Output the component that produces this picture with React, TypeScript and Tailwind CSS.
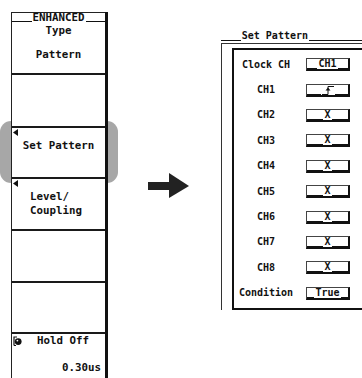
import React from "react";

const mono = { fontFamily: '"DejaVu Sans Mono", "Liberation Mono", monospace' };

function Tri() {
  return (
    <svg width="5" height="7" viewBox="0 0 5 7" className="absolute left-[1px] top-[1px]">
      <polygon points="5,0 0,3.5 5,7" fill="#111" />
    </svg>
  );
}

function Divider() {
  return <div className="h-[2px] bg-[#1a1a1a]" />;
}

function ValueBox({ children }: { children: React.ReactNode }) {
  return (
    <div className="flex h-[13px] w-[44px] items-end border-t border-l border-r-2 border-b-2 border-t-[#444] border-l-[#444] border-r-[#111] border-b-[#111] bg-white">
      <div className="flex-1 border-b border-[#111] h-full" />
      <div className="flex h-full items-center px-[1px] leading-none">{children}</div>
      <div className="flex-1 border-b border-[#111] h-full" />
    </div>
  );
}

function Edge() {
  return (
    <svg width="12" height="10" viewBox="0 0 12 10">
      <polyline points="0,9.5 6,9.5 6,1.5 12,1.5" fill="none" stroke="#111" strokeWidth="1" />
      <polygon points="3.5,5.5 6,2.5 8.5,5.5" fill="#111" />
    </svg>
  );
}

const rows: { label: string; value: React.ReactNode }[] = [
  { label: "Clock CH", value: "CH1" },
  { label: "CH1", value: <Edge /> },
  { label: "CH2", value: "X" },
  { label: "CH3", value: "X" },
  { label: "CH4", value: "X" },
  { label: "CH5", value: "X" },
  { label: "CH6", value: "X" },
  { label: "CH7", value: "X" },
  { label: "CH8", value: "X" },
  { label: "Condition", value: "True" },
];

export default function App() {
  return (
    <div className="relative flex h-[378px] w-[362px] overflow-hidden bg-white text-[#111]" style={mono}>
      {/* highlight behind Set Pattern */}
      <div className="absolute left-[0px] top-[121px] h-[62px] w-[118px] rounded-[11px] bg-[#a7a7a7]" />

      {/* Left soft-key panel */}
      <div className="relative z-10 ml-[11px] mt-[12px] flex w-[97px] flex-col border-l border-[#222] border-r-[3px] border-r-[#111] text-[10.8px] font-bold leading-none">
        {/* header */}
        <div className="flex h-[11px] flex-col border-t border-[#222] bg-white">
          <div className="flex h-[9px] items-end">
            <div className="flex-1 border-b border-[#111] h-full" />
            <div className="px-[1px] leading-[9px]">ENHANCED</div>
            <div className="flex-1 border-b border-[#111] h-full" />
          </div>
          <div className="mt-[1px] h-[1px] bg-[#111]" />
        </div>
        {/* Type */}
        <div className="flex h-[50px] flex-col items-center bg-white pt-[3px]">
          <div>Type</div>
          <div className="mt-[13px]">Pattern</div>
        </div>
        <Divider />
        <div className="h-[51px] bg-white" />
        <Divider />
        {/* Set Pattern */}
        <div className="relative flex h-[49px] items-start justify-center bg-white pt-[13px]">
          <Tri />
          <div>Set Pattern</div>
        </div>
        <Divider />
        {/* Level/Coupling */}
        <div className="relative flex h-[50px] flex-col bg-white pl-[18px] pt-[13px]">
          <Tri />
          <div>Level/</div>
          <div className="mt-[3px]">Coupling</div>
        </div>
        <Divider />
        <div className="h-[50px] bg-white" />
        <Divider />
        <div className="h-[49px] bg-white" />
        <Divider />
        {/* Hold Off */}
        <div className="flex flex-1 flex-col bg-white pt-[2px]">
          <div className="flex items-center">
            <svg width="9" height="10" viewBox="0 0 9 10" className="ml-[1px]">
              <path d="M1 9.5 V1 H4" fill="none" stroke="#111" strokeWidth="1.2" />
              <path d="M1 9.5 H3" fill="none" stroke="#111" strokeWidth="1" />
              <circle cx="5.2" cy="5.6" r="3.4" fill="#111" />
              <circle cx="4.4" cy="4.6" r="0.9" fill="#fff" />
            </svg>
            <div className="ml-[15px]">Hold Off</div>
          </div>
          <div className="mt-[16px] pr-[4px] text-right">0.30us</div>
        </div>
      </div>

      {/* Arrow */}
      <div className="flex w-[113px] items-start">
        <svg width="42" height="26" viewBox="0 0 42 26" className="ml-[40px] mt-[173px]">
          <rect x="0" y="9" width="22" height="8" fill="#222" />
          <polygon points="21,0 41,13 21,25" fill="#222" />
        </svg>
      </div>

      {/* Set Pattern dialog */}
      <div className="flex flex-1 flex-col pt-[29px] text-[10px] font-bold leading-none">
        <div className="flex h-[12px] items-end">
          <div className="flex-1 border-b border-[#111] h-full" />
          <div className="px-[1px] leading-[11px]">Set Pattern</div>
          <div className="w-[53px] border-b border-[#111] h-full" />
        </div>
        <div className="mt-[2px] flex h-[267px] flex-col border-t border-l border-[#333] pl-[10px] pt-[4px]">
          <div className="flex flex-1 flex-col border-t-2 border-l-2 border-b-2 border-[#111] pt-[2px]">
            {rows.map((r) => (
              <div key={r.label} className="flex h-[25.4px] items-center">
                <div className="w-[64px] text-center">{r.label}</div>
                <div className="ml-[8px]">
                  <ValueBox>{r.value}</ValueBox>
                </div>
              </div>
            ))}
          </div>
        </div>
      </div>
    </div>
  );
}
